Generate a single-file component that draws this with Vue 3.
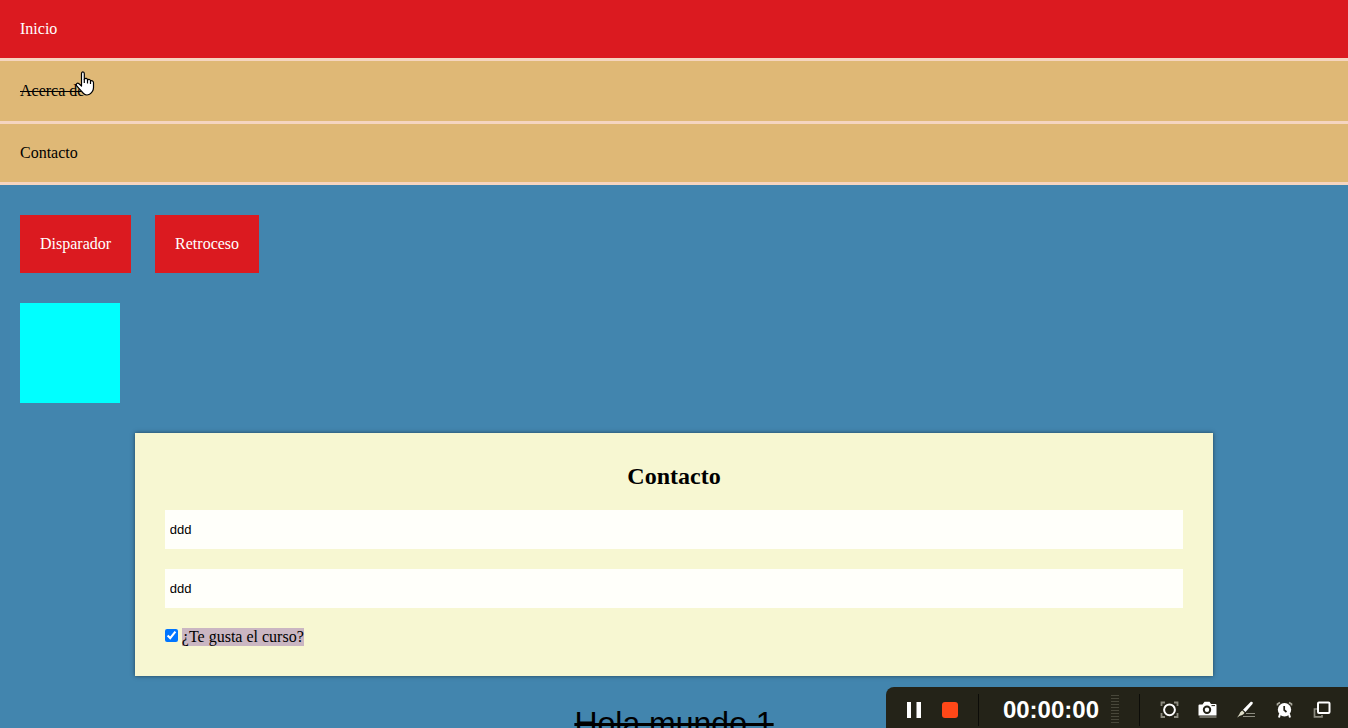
<script setup>
import { ref } from 'vue'

const links = [
  { text: 'Inicio', state: 'active' },
  { text: 'Acerca de', state: 'hovered' },
  { text: 'Contacto', state: '' },
]
const first = ref('ddd')
const second = ref('ddd')
const likes = ref(true)
</script>

<template>
  <div class="page">
    <nav>
      <ul class="menu">
        <li v-for="l in links" :key="l.text" :class="l.state"><a href="#">{{ l.text }}</a></li>
      </ul>
    </nav>
    <div class="actions">
      <button type="button">Disparador</button>
      <button type="button">Retroceso</button>
    </div>
    <div class="box"></div>
    <form class="card" @submit.prevent>
      <h2>Contacto</h2>
      <input v-model="first" class="field" type="text" aria-label="Nombre" />
      <input v-model="second" class="field" type="text" aria-label="Apellido" />
      <div class="check">
        <input id="likes" v-model="likes" type="checkbox" />
        <label for="likes">¿Te gusta el curso?</label>
      </div>
    </form>
    <h1>Hola mundo 1</h1>

    <svg class="cursor" width="20" height="26" viewBox="0 0 20 26">
      <path d="M6.5 13V2.8C6.5 .2 9.3 .2 9.3 2.8V8.2C10.5 6.8 12.4 7.3 12.5 9C13.8 7.9 15.4 8.5 15.5 10C17 9.2 18.5 10 18.5 11.8V16.5C18.5 20 16.5 22 14.5 23.3C12.5 24.3 10 24 8.5 22.5C6.5 20.5 4.8 18.5 1.8 15C.4 13 2.3 11.5 4 12.7L6.5 15Z" fill="#fff" stroke="#000" stroke-width="1.2" stroke-linejoin="round" />
      <path d="M9.3 8V12M12.5 9V12.5M15.5 10V13" fill="none" stroke="#000" stroke-width="1.2" />
    </svg>

    <div class="recorder">
      <button type="button" class="pause" aria-label="Pausa">
        <svg width="16" height="16"><path d="M1 0h4v16h-4zM10.500 0h4.500v16h-4.500z" fill="#fff" /></svg>
      </button>
      <button type="button" class="stop" aria-label="Detener"></button>
      <i class="divider"></i>
      <time>00:00:00</time>
      <i class="meter"></i>
      <i class="divider second"></i>
      <div class="tools">
        <button type="button" aria-label="Enfocar">
          <svg width="20" height="18" viewBox="0 0 20 18" fill="none"><path d="M1.500 5V1.500H5M14 1.500H17.500V5M1.500 12V16H5M14 16H17.500V12" stroke="#8d8c80" stroke-width="1.8" /><circle cx="9.500" cy="8.800" r="5.400" stroke="#fff" stroke-width="2" /></svg>
        </button>
        <button type="button" aria-label="Captura">
          <svg width="20" height="18" viewBox="0 0 20 18"><path d="M.5 4.500Q.5 3.500 1.500 3.500H4.500L6.500 .8H11.500L13 3H17.500Q18.500 3 18.500 4V14.500H.5Z" fill="#fff" /><circle cx="9" cy="8.800" r="3.200" fill="#fff" stroke="#242318" stroke-width="2" /><path d="M13.500 4.600h3.500" stroke="#242318" /><path d="M1.500 16h17" stroke="#8d8c80" stroke-width="1.4" /></svg>
        </button>
        <button type="button" aria-label="Dibujar">
          <svg width="20" height="18" viewBox="0 0 20 18"><path d="M14.800 .8Q17.500 .4 16.500 3L9.500 11L7 8.800Z" fill="#fff" /><path d="M6.200 9.500L8.500 11.800C7.500 14.500 4.500 13.800 1 16.800L3.500 13C4 11 5 10.500 6.200 9.500Z" fill="#e0dfc9" /><path d="M10 12.500H19M7 15.500H19" stroke="#8d8c80" /></svg>
        </button>
        <button type="button" aria-label="Temporizador">
          <svg width="20" height="18" viewBox="0 0 20 18"><path d="M6 13L5 16.500M15 13L16 16.500" stroke="#fff" stroke-width="2" /><path d="M3.500 4.500V3L6 1.500M15 1.500L17.500 3V4.500" fill="none" stroke="#a9a89c" stroke-width="1.700" /><circle cx="10.500" cy="8.800" r="6.700" fill="#fff" /><path d="M10.200 5V9L12.500 11" fill="none" stroke="#242318" stroke-width="1.700" /></svg>
        </button>
        <button type="button" aria-label="Ventana">
          <svg width="20" height="18" viewBox="0 0 20 18" fill="none"><path d="M5 8H2.500V15.800H10V14" stroke="#8d8c80" stroke-width="1.700" /><rect x="6" y="1.500" width="11.500" height="10.500" rx="1" stroke="#fff" stroke-width="2" /></svg>
        </button>
      </div>
    </div>
  </div>
</template>

<style>
html,
body {
  margin: 0;
  overflow: hidden;
}
</style>

<style scoped>
* {
  box-sizing: border-box;
}
.page {
  position: relative;
  height: 100vh;
  overflow: hidden;
  background: #4285ae;
  font: 16px/18px "Liberation Serif", "Times New Roman", serif;
  color: #000;
}
.menu {
  margin: 0;
  padding: 0;
  list-style: none;
}
.menu li {
  border-bottom: 3px solid #f5d5c0;
  background: #dfb876;
}
.menu a {
  display: block;
  padding: 20px;
  color: inherit;
  text-decoration: none;
}
.menu .active {
  background: #db1a20;
  color: #fff;
}
.menu .hovered a {
  line-height: 20px;
  text-decoration: line-through;
}
button {
  border: 0;
  padding: 0;
  background: none;
  color: #fff;
  font: inherit;
}
.actions {
  display: flex;
  gap: 24px;
  padding: 30px 20px;
}
.actions button {
  padding: 20px;
  background: #db1a20;
}
.box {
  width: 100px;
  height: 100px;
  margin-left: 20px;
  background: cyan;
}
.card {
  display: flex;
  flex-direction: column;
  gap: 20px;
  width: 80%;
  margin: 30px auto 0;
  padding: 30px;
  background: #f7f7d2;
  box-shadow: 0 0 4px rgba(0, 0, 0, 0.5);
}
h2 {
  margin: 0;
  font-size: 24px;
  line-height: 27px;
  text-align: center;
}
.field {
  width: 100%;
  height: 39px;
  padding: 0 5px;
  border: 0;
  background: #fffffa;
  color: #000;
  font: 13px "Liberation Sans", Arial, sans-serif;
}
.check {
  display: flex;
  align-items: flex-start;
  gap: 4px;
}
.check input {
  width: 13px;
  height: 13px;
  margin: 1px 0 4px;
}
.check label {
  background: #cab6c2;
}
h1 {
  margin: 28px 0 0;
  font: 32px/38px "Liberation Sans", Arial, sans-serif;
  text-align: center;
  text-decoration: line-through;
}
.cursor {
  position: absolute;
  left: 75px;
  top: 71px;
}
.recorder {
  position: fixed;
  right: 0;
  bottom: 0;
  display: flex;
  align-items: center;
  height: 41px;
  padding: 4px 16px 0 20px;
  border-radius: 8px 0 0 0;
  background: #242318;
}
.recorder svg {
  display: block;
}
.stop {
  width: 16px;
  height: 16px;
  margin-left: 20px;
  border-radius: 3px;
  background: #ff4818;
}
.divider {
  width: 1px;
  height: 32px;
  margin: 0 24px 0 20px;
  background: #0c0c08;
}
time {
  color: #fff;
  font: bold 24px/32px "Liberation Sans", Arial, sans-serif;
}
.meter {
  width: 8px;
  height: 30px;
  margin-left: 12px;
  background: repeating-linear-gradient(#48473a 0 1px, #242318 1px 3px);
}
.divider.second {
  margin: 0 20px;
}
.tools {
  display: flex;
  gap: 18px;
}
</style>
